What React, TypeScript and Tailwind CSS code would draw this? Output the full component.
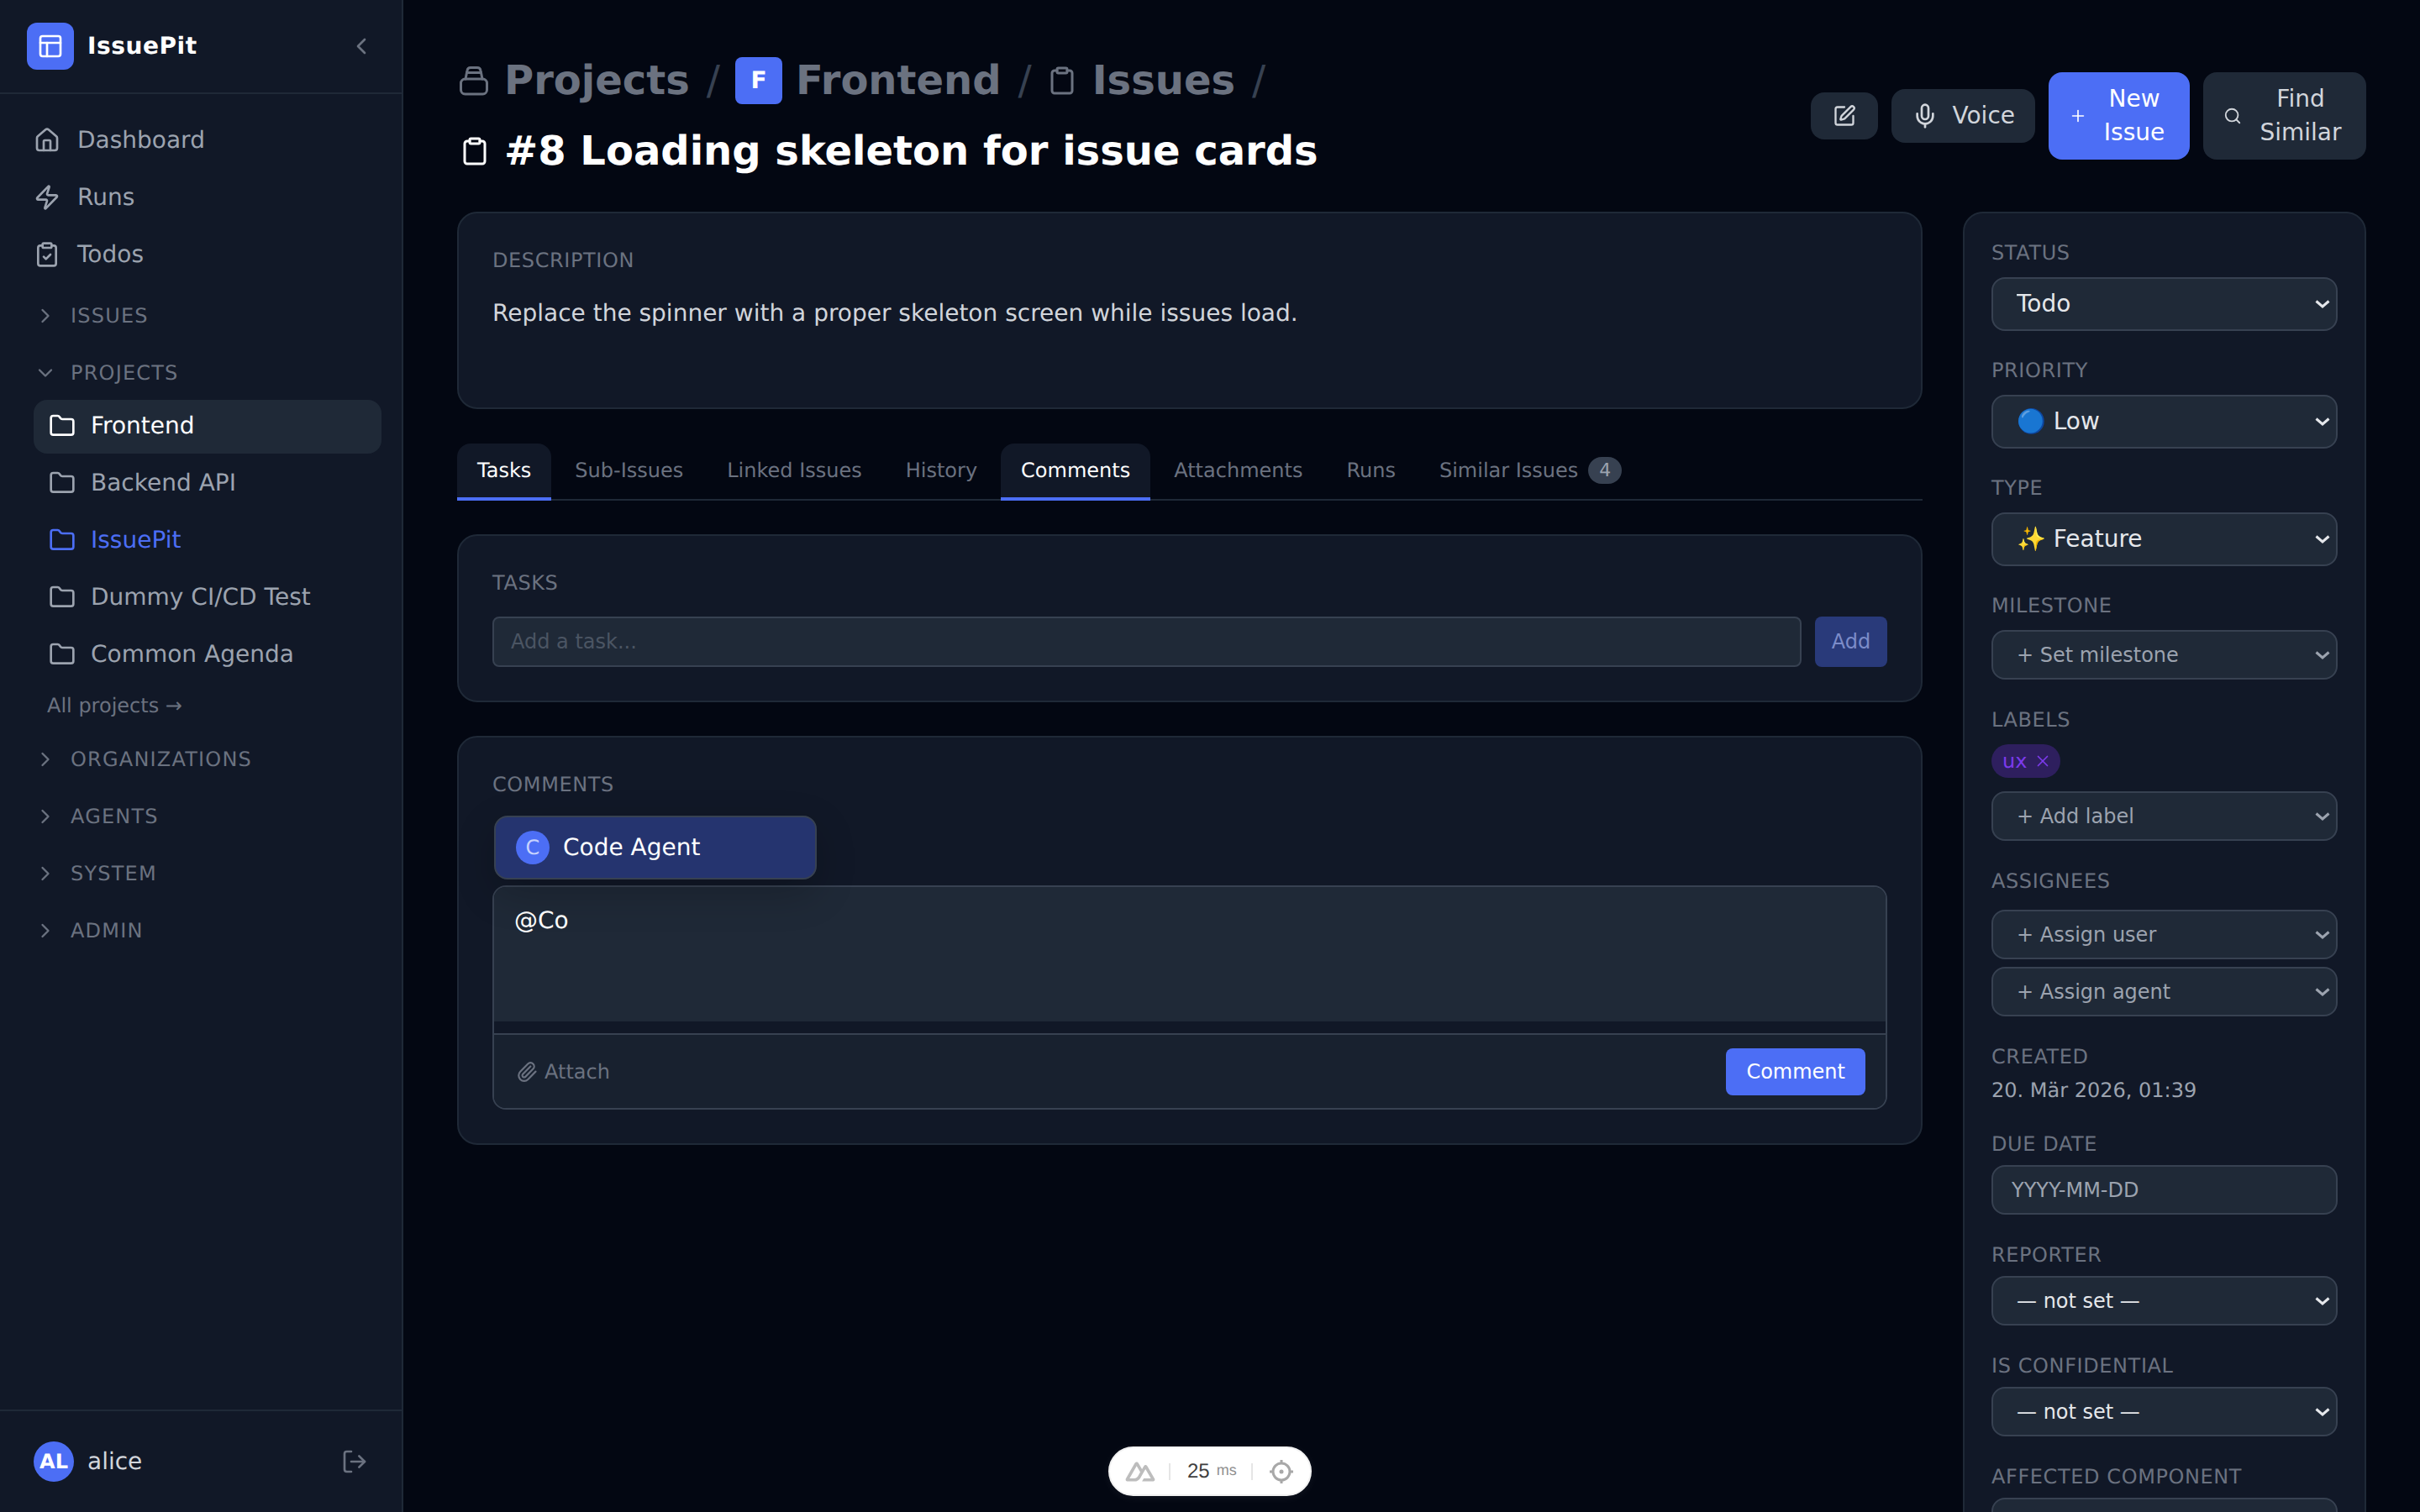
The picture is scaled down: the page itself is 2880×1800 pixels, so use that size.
import { ChevronDown, ChevronLeft, ChevronRight, Clipboard, ClipboardCheck, Folder, House, LogOut, Mic, PanelsTopLeft, Paperclip, Plus, Search, SquarePen, X, Zap } from 'lucide-react';
import type { ReactNode } from 'react';

const font = 'font-["DejaVu_Sans","Noto_Color_Emoji",sans-serif]';

function NavLink({ icon, label }: { icon: ReactNode; label: string }) {
  return (
    <div className="flex h-[68px] items-center gap-[20px] px-[40px] text-[28px] text-[#9ca3af]">
      {icon}
      <span>{label}</span>
    </div>
  );
}

function SectionHead({ label, open }: { label: string; open?: boolean }) {
  return (
    <div className="flex h-[68px] items-center gap-[16px] pl-[40px] text-[24px] tracking-[1.2px] text-[#6b7280]">
      {open ? <ChevronDown size={28} /> : <ChevronRight size={28} />}
      <span>{label}</span>
    </div>
  );
}

function ProjectLink({ label, state }: { label: string; state?: 'active' | 'current' }) {
  const tone = state === 'active' ? 'bg-[#1f2937] text-white' : state === 'current' ? 'text-[#4c6ef5]' : 'text-[#9ca3af]';
  return (
    <div className={`mb-[4px] ml-[40px] mr-[24px] flex h-[64px] items-center gap-[18px] rounded-[16px] px-[18px] pb-[2px] text-[28px] ${tone}`}>
      <Folder size={32} />
      <span>{label}</span>
    </div>
  );
}

function Sidebar() {
  return (
    <aside className="flex h-full w-[480px] shrink-0 flex-col border-r-2 border-[#1f2937] bg-[#111827]">
      <div className="flex h-[112px] items-center border-b-2 border-[#1f2937] pl-[32px] pr-[32px]">
        <div className="flex h-[56px] w-[56px] items-center justify-center rounded-[12px] bg-[#4c6ef5] text-white">
          <PanelsTopLeft size={32} />
        </div>
        <span className="ml-[16px] flex-1 text-[28px] font-bold tracking-[0.56px] text-white">IssuePit</span>
        <ChevronLeft size={32} className="text-[#6b7280]" />
      </div>
      <div className="flex-1 pt-[21px]">
        <NavLink icon={<House size={32} />} label="Dashboard" />
        <NavLink icon={<Zap size={32} />} label="Runs" />
        <NavLink icon={<ClipboardCheck size={32} />} label="Todos" />
        <div className="mt-[5px]" />
        <SectionHead label="ISSUES" />
        <SectionHead label="PROJECTS" open />
        <div className="-mt-[2px]">
          <ProjectLink label="Frontend" state="active" />
          <ProjectLink label="Backend API" />
          <ProjectLink label="IssuePit" state="current" />
          <ProjectLink label="Dummy CI/CD Test" />
          <ProjectLink label="Common Agenda" />
        </div>
        <div className="ml-[56px] mt-[10px] text-[24px] leading-[36px] text-[#6b7280]">All projects →</div>
        <div className="mt-[12px]" />
        <SectionHead label="ORGANIZATIONS" />
        <SectionHead label="AGENTS" />
        <SectionHead label="SYSTEM" />
        <SectionHead label="ADMIN" />
      </div>
      <div className="flex h-[122px] items-center border-t-2 border-[#1f2937] pl-[40px] pr-[40px]">
        <div className="flex h-[48px] w-[48px] items-center justify-center rounded-full bg-[#4c6ef5] text-[24px] font-bold text-white">AL</div>
        <span className="ml-[16px] flex-1 text-[28px] text-[#d1d5db]">alice</span>
        <LogOut size={32} className="text-[#6b7280]" />
      </div>
    </aside>
  );
}

function ProjectsGlyph() {
  return (
    <svg width="36" height="36" viewBox="0 0 36 36" fill="none" stroke="currentColor" strokeWidth="3" strokeLinecap="round" strokeLinejoin="round">
      <rect x="2.5" y="16" width="31" height="18" rx="5" />
      <path d="M8 16 L10 6 Q10.5 2.5 14 2.5 H22 Q25.5 2.5 26 6 L28 16" />
      <path d="M9.5 8.5 H26.5" />
    </svg>
  );
}

function Crumbs() {
  return (
    <div className="flex h-[56px] items-center gap-[20px] text-[48px] font-bold text-[#6b7280]">
      <span className="ml-[2px] flex items-center gap-[18px]">
        <ProjectsGlyph />
        Projects
      </span>
      <span className="-mr-[2px] font-normal text-[#374151]">/</span>
      <span className="-mr-[4px] flex h-[56px] w-[56px] items-center justify-center rounded-[8px] bg-[#4c6ef5] text-[28px] text-white">F</span>
      <span>Frontend</span>
      <span className="-mr-[2px] font-normal text-[#374151]">/</span>
      <Clipboard size={36} className="-mr-[2px]" />
      <span>Issues</span>
      <span className="font-normal text-[#374151]">/</span>
    </div>
  );
}

function Header() {
  return (
    <div className="flex items-center justify-between">
      <div>
        <Crumbs />
        <div className="mt-[28px] flex h-[56px] items-center gap-[17px] pl-[3px] text-[48px] font-bold text-white">
          <Clipboard size={36} />
          <span>#8 Loading skeleton for issue cards</span>
        </div>
      </div>
      <div className="flex items-center gap-[16px] text-[28px] leading-[40px]">
        <button className="flex h-[56px] w-[80px] items-center justify-center rounded-[16px] bg-[#1f2937] text-[#d1d5db]">
          <SquarePen size={28} />
        </button>
        <button className="flex items-center gap-[16px] rounded-[16px] bg-[#1f2937] px-[24px] py-[12px] text-[#d1d5db]">
          <Mic size={32} />
          Voice
        </button>
        <button className="flex w-[168px] items-center gap-[14px] rounded-[16px] bg-[#4c6ef5] px-[24px] py-[12px] text-center text-white">
          <Plus size={22} strokeWidth={1.8} className="shrink-0" />
          <span>New Issue</span>
        </button>
        <button className="flex w-[194px] items-center gap-[16px] rounded-[16px] bg-[#1f2937] px-[24px] py-[12px] text-center text-[#d1d5db]">
          <Search size={22} className="shrink-0" />
          <span>Find Similar</span>
        </button>
      </div>
    </div>
  );
}

function Card({ title, children, className = '' }: { title: string; children: ReactNode; className?: string }) {
  return (
    <section className={`rounded-[24px] border-2 border-[#1f2937] bg-[#111827] px-[40px] ${className}`}>
      <h3 className="text-[24px] leading-[32px] font-normal tracking-[0.6px] text-[#6b7280]">{title}</h3>
      {children}
    </section>
  );
}

const tabs = ['Tasks', 'Sub-Issues', 'Linked Issues', 'History', 'Comments', 'Attachments', 'Runs', 'Similar Issues'];

function Tabs() {
  return (
    <div className="mt-[41px] flex h-[68px] gap-[4px] border-b-2 border-[#1f2937]">
      {tabs.map((tab) => {
        const active = tab === 'Tasks' || tab === 'Comments';
        return (
          <div
            key={tab}
            className={`-mb-[2px] flex h-[68px] items-center gap-[12px] rounded-t-[16px] border-b-4 px-[24px] text-[24px] ${
              active ? 'border-[#4c6ef5] bg-[#111827] text-white' : 'border-transparent text-[#6b7280]'
            }`}
          >
            {tab}
            {tab === 'Similar Issues' && (
              <span className="flex h-[32px] w-[40px] items-center justify-center rounded-full bg-[#374151] text-[22px] text-[#9ca3af]">4</span>
            )}
          </div>
        );
      })}
    </div>
  );
}

function CommentBox() {
  return (
    <div className="relative mt-[20px]">
      <div className="absolute left-[2px] top-[-83px] z-10 flex h-[76px] w-[384px] items-center gap-[16px] rounded-[16px] border-2 border-[#374151] bg-[#25346f] px-[24px] text-[28px] text-white shadow-[0_16px_48px_rgba(0,0,0,0.2)]">
        <span className="flex h-[40px] w-[40px] items-center justify-center rounded-full bg-[#4c6ef5] text-[24px] text-[#c7d2fe]">C</span>
        Code Agent
      </div>
      <div className="h-[267px] overflow-hidden rounded-[16px] border-2 border-[#374151]">
        <div className="h-[160px] bg-[#1f2937] px-[24px] py-[20px] text-[28px] leading-[40px] text-white">@Co</div>
        <div className="h-[14px]" />
        <div className="flex h-[89px] items-center justify-between border-t-2 border-[#374151] bg-[#18212f] pl-[26px] pr-[24px]">
          <span className="flex items-center gap-[8px] text-[24px] text-[#6b7280]">
            <Paperclip size={26} />
            Attach
          </span>
          <button className="h-[56px] rounded-[8px] bg-[#4c6ef5] px-[24px] text-[24px] text-white">Comment</button>
        </div>
      </div>
    </div>
  );
}

function Field({ label, children }: { label: string; children: ReactNode }) {
  return (
    <div className="mt-[34px] first:mt-0">
      <div className="text-[24px] leading-[28px] tracking-[0.6px] text-[#6b7280]">{label}</div>
      {children}
    </div>
  );
}

function Select({ value, big, muted, className = 'mt-[11px]' }: { value: string; big?: boolean; muted?: boolean; className?: string }) {
  const tone = muted ? 'text-[#9ca3af]' : 'text-[#e5e7eb]';
  return (
    <div className={`relative ${big ? '-mb-[1px] mt-[15px]' : className} ${tone}`}>
      <select
        defaultValue={value}
        className={`block w-full appearance-none rounded-[16px] border-2 border-[#374151] bg-[#1f2937] pl-[28px] pr-[48px] outline-none ${
          big ? 'h-[64px] text-[28px]' : 'h-[59px] text-[24px]'
        }`}
      >
        <option>{value}</option>
      </select>
      <svg width="18" height="10" viewBox="0 0 18 10" fill="none" stroke="currentColor" strokeWidth="3" className="pointer-events-none absolute right-[9px] top-1/2 -translate-y-1/2">
        <path d="M1.5 1.5 L9 8 L16.5 1.5" />
      </svg>
    </div>
  );
}

function DetailsPanel() {
  return (
    <aside className="h-[1700px] w-[480px] shrink-0 rounded-[24px] border-2 border-[#1f2937] bg-[#111827] px-[32px] pt-[33px]">
      <Field label="STATUS"><Select value="Todo" big /></Field>
      <Field label="PRIORITY"><Select value="🔵 Low" big /></Field>
      <Field label="TYPE"><Select value="✨ Feature" big /></Field>
      <Field label="MILESTONE"><Select value="+ Set milestone" muted className="mt-[15px]" /></Field>
      <Field label="LABELS">
        <span className="mt-[15px] flex h-[40px] w-[82px] items-center gap-[8px] rounded-full bg-[#2e1f5e] pl-[13px] text-[24px] text-[#7c3aed]">
          ux
          <X size={22} strokeWidth={1.8} />
        </span>
        <Select value="+ Add label" muted className="mt-[16px]" />
      </Field>
      <Field label="ASSIGNEES">
        <Select value="+ Assign user" muted className="mt-[20px]" />
        <Select value="+ Assign agent" muted className="mt-[9px]" />
      </Field>
      <Field label="CREATED">
        <div className="mt-[10px] text-[24px] leading-[32px] text-[#9ca3af]">20. Mär 2026, 01:39</div>
      </Field>
      <Field label="DUE DATE">
        <input placeholder="YYYY-MM-DD" className="mt-[11px] block h-[59px] w-full rounded-[16px] border-2 border-[#374151] bg-[#1f2937] px-[22px] text-[24px] text-[#9ca3af] outline-none placeholder:text-[#9ca3af]" />
      </Field>
      <Field label="REPORTER"><Select value="— not set —" /></Field>
      <Field label="IS CONFIDENTIAL"><Select value="— not set —" /></Field>
      <Field label="AFFECTED COMPONENT"><Select value="— not set —" /></Field>
    </aside>
  );
}

function DevBar() {
  return (
    <div className="absolute bottom-[19px] left-1/2 flex h-[59px] w-[242px] -translate-x-1/2 items-center rounded-full border-2 border-[#f1f1f1] bg-white pl-[15px] font-['Liberation_Sans',sans-serif] shadow-[0_2px_12px_rgba(255,255,255,0.06)]">
      <svg width="42" height="42" viewBox="0 0 512 512" fill="#bdbdbd">
        <path d="M281.44 397.667H438.32C443.326 397.667 448.118 395.908 452.453 393.427C456.789 390.946 461.258 387.831 463.76 383.533C466.262 379.236 468.002 374.36 468 369.399C467.998 364.437 466.266 359.563 463.76 355.268L357.76 172.947C355.258 168.65 352.201 165.534 347.867 163.053C343.532 160.573 337.325 158.813 332.32 158.813C327.315 158.813 322.521 160.573 318.187 163.053C313.852 165.534 310.795 168.65 308.293 172.947L281.44 219.587L227.733 129.13C225.229 124.834 222.176 120.307 217.84 117.827C213.504 115.346 208.713 115 203.707 115C198.701 115 193.909 115.346 189.573 117.827C185.238 120.307 180.771 124.834 178.267 129.13L46.8267 355.268C44.3208 359.563 44.0022 364.437 44 369.399C43.9978 374.36 44.3246 379.235 46.8267 383.533C49.3288 387.83 53.7979 390.946 58.1333 393.427C62.4688 395.908 67.2603 397.667 72.2667 397.667H171.2C210.401 397.667 238.934 380.082 258.827 346.787L306.88 263.4L332.32 219.587L410.053 352.44H306.88L281.44 397.667ZM169.787 352.44H100.533L203.707 174.36L256 263.4L221.361 323.784C208.151 345.387 193.089 352.44 169.787 352.44Z" />
      </svg>
      <span className="ml-[13px] h-[20px] w-[2px] bg-[#e5e5e5]" />
      <span className="ml-[20px] flex w-[57px] items-baseline gap-[8px] text-[24px] text-[#3f3f3f]">
        25
        <span className="relative -top-[3px] text-[18px] text-[#8f8f8f]">ms</span>
      </span>
      <span className="ml-[19px] h-[20px] w-[2px] bg-[#e5e5e5]" />
      <svg width="30" height="30" viewBox="0 0 30 30" fill="none" stroke="#a8a8a8" strokeWidth="3" className="ml-[19px]">
        <circle cx="15" cy="15" r="10" />
        <path d="M15 1v5M15 24v5M1 15h5M24 15h5" />
        <circle cx="15" cy="15" r="2.5" fill="#a8a8a8" stroke="none" />
      </svg>
    </div>
  );
}

export default function App() {
  return (
    <div className={`relative flex h-[1800px] overflow-hidden bg-[#030712] [text-rendering:geometricPrecision] ${font}`}>
      <Sidebar />
      <main className="min-w-0 flex-1 px-[64px] pt-[68px]">
        <Header />
        <div className="mt-[44px] flex items-start gap-[48px]">
          <div className="min-w-0 flex-1">
            <Card title="DESCRIPTION" className="h-[235px] pt-[40px]">
              <p className="mt-[25px] text-[28px] leading-[44px] text-[#d1d5db]">Replace the spinner with a proper skeleton screen while issues load.</p>
            </Card>
            <Tabs />
            <Card title="TASKS" className="mt-[40px] h-[200px] pt-[40px]">
              <div className="mt-[24px] flex gap-[16px]">
                <input placeholder="Add a task..." className="h-[60px] min-w-0 flex-1 rounded-[8px] border-2 border-[#374151] bg-[#1f2937] px-[20px] text-[24px] outline-none placeholder:text-[#4b5563]" />
                <button className="h-[60px] w-[86px] rounded-[8px] bg-[#293a7a] text-[24px] text-[#7c8cc9]">Add</button>
              </div>
            </Card>
            <Card title="COMMENTS" className="mt-[40px] h-[487px] pt-[40px]">
              <div className="h-[84px]" />
              <CommentBox />
            </Card>
          </div>
          <DetailsPanel />
        </div>
      </main>
      <DevBar />
    </div>
  );
}
